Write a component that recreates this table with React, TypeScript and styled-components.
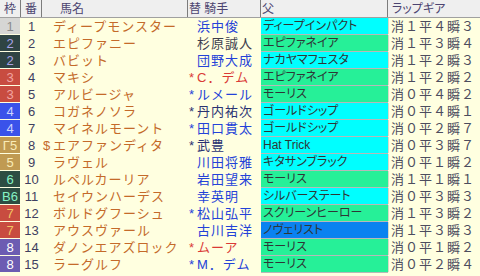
import styled, { createGlobalStyle } from "styled-components";

const GlobalStyle = createGlobalStyle`
  html, body {
    margin: 0;
    padding: 0;
    background-color: #ffffe0;
  }
  body {
    width: 480px;
    height: 276px;
    overflow: hidden;
    font-family: "Liberation Sans", "Noto Sans CJK JP", sans-serif;
  }
`;

const COLS = "21px 21px 146px 73px 127px 1fr";

const Table = styled.div`
  display: flex;
  flex-direction: column;
  width: 480px;
  background-color: #ffffe0;
`;

const HeaderRow = styled.div`
  display: grid;
  grid-template-columns: ${COLS};
  height: 17px;
  background-color: #efefef;
  border-bottom: 1px solid #a0a0a0;
`;

const HeadCell = styled.div<{ $align?: string; $pad?: number; $last?: boolean }>`
  display: flex;
  align-items: center;
  justify-content: ${(p) => p.$align || "flex-start"};
  padding-left: ${(p) => p.$pad || 0}px;
  border-right: ${(p) => (p.$last ? "none" : "1px solid #7c7c7c")};
  font-size: 12px;
  line-height: 16px;
  color: #4c4470;
  font-feature-settings: "palt";
  white-space: nowrap;
  overflow: hidden;
`;

const Row = styled.div`
  display: grid;
  grid-template-columns: ${COLS};
  height: 17px;
`;

const Waku = styled.div<{ $bg: string; $fg: string }>`
  width: 20px;
  height: 16px;
  display: flex;
  align-items: center;
  justify-content: center;
  background-color: ${(p) => p.$bg};
  color: ${(p) => p.$fg};
  font-size: 13px;
  line-height: 15px;
`;

const Num = styled.div`
  height: 16px;
  display: flex;
  align-items: center;
  justify-content: center;
  color: #3f4060;
  font-size: 13px;
  line-height: 15px;
`;

const NameCell = styled.div`
  height: 16px;
  display: flex;
  align-items: center;
  padding-left: 1px;
  color: #c46a2a;
  font-size: 13px;
  letter-spacing: 1px;
  line-height: 15px;
  white-space: nowrap;
  overflow: hidden;
`;

const Mark = styled.span<{ $w: number }>`
  display: inline-block;
  flex: none;
  width: ${(p) => p.$w}px;
  letter-spacing: 0;
`;

const JockeyCell = styled.div<{ $color: string }>`
  height: 16px;
  display: flex;
  align-items: center;
  padding-left: 1px;
  color: ${(p) => p.$color};
  font-size: 13px;
  letter-spacing: 1px;
  line-height: 15px;
  white-space: nowrap;
  overflow: hidden;
`;

const SireCell = styled.div<{ $bg: string }>`
  height: 16px;
  display: flex;
  align-items: center;
  padding-left: 2px;
  background-color: ${(p) => p.$bg};
  border-bottom: 1px solid #b8b8b8;
  color: #2e3636;
  font-size: 12px;
  line-height: 14px;
  font-feature-settings: "palt";
  white-space: nowrap;
  overflow: hidden;
`;

const GearCell = styled.div`
  height: 16px;
  display: flex;
  align-items: center;
  padding-left: 2px;
  border-left: 1px solid #d8d8c8;
  color: #4c4c5e;
  font-size: 13px;
  letter-spacing: 1px;
  line-height: 15px;
  white-space: nowrap;
  overflow: hidden;
`;

const WAKU: Record<string, [string, string]> = {
  "1": ["#d6d6d4", "#8c8c8c"],
  "2": ["#2f4444", "#aaa2e6"],
  "3": ["#c84c40", "#f2a4a0"],
  "4": ["#3a52ea", "#ccd4ff"],
  "5": ["#c09a52", "#faecb8"],
  "6": ["#2d4d42", "#86f2c4"],
  "7": ["#c84c40", "#f2c462"],
  "8": ["#6c5cb2", "#ffffff"],
};

const SIRE = {
  cyan: "#00ffff",
  green: "#26f098",
  blue: "#0a82f0",
};

const BLUE = "#2442d8";
const DARK = "#3e3e4e";
const NAVY = "#2a3272";
const RED = "#da3a36";

type Horse = {
  waku: string;
  label?: string;
  no: number;
  mark?: string;
  name: string;
  jmark?: string;
  jockey: string;
  jcolor: string;
  sire: string;
  sireBg: string;
  gear: string;
};

const horses: Horse[] = [
  { waku: "1", no: 1, name: "ディープモンスター", jockey: "浜中俊", jcolor: BLUE, sire: "ディープインパクト", sireBg: SIRE.cyan, gear: "消１平４瞬３" },
  { waku: "2", no: 2, name: "エピファニー", jockey: "杉原誠人", jcolor: DARK, sire: "エピファネイア", sireBg: SIRE.green, gear: "消１平３瞬４" },
  { waku: "2", no: 3, name: "バビット", jockey: "団野大成", jcolor: BLUE, sire: "ナカヤマフェスタ", sireBg: SIRE.cyan, gear: "消１平２瞬３" },
  { waku: "3", no: 4, name: "マキシ", jmark: "*", jockey: "C．デム", jcolor: RED, sire: "エピファネイア", sireBg: SIRE.green, gear: "消１平２瞬２" },
  { waku: "3", no: 5, name: "アルビージャ", jmark: "*", jockey: "ルメール", jcolor: BLUE, sire: "モーリス", sireBg: SIRE.green, gear: "消０平４瞬２" },
  { waku: "4", no: 6, name: "コガネノソラ", jmark: "*", jockey: "丹内祐次", jcolor: NAVY, sire: "ゴールドシップ", sireBg: SIRE.cyan, gear: "消０平４瞬１" },
  { waku: "4", no: 7, name: "マイネルモーント", jmark: "*", jockey: "田口貫太", jcolor: BLUE, sire: "ゴールドシップ", sireBg: SIRE.cyan, gear: "消０平２瞬７" },
  { waku: "5", label: "Γ5", no: 8, mark: "$", name: "エアファンディタ", jmark: "*", jockey: "武豊", jcolor: NAVY, sire: "Hat Trick", sireBg: SIRE.cyan, gear: "消０平３瞬７" },
  { waku: "5", no: 9, name: "ラヴェル", jockey: "川田将雅", jcolor: BLUE, sire: "キタサンブラック", sireBg: SIRE.cyan, gear: "消０平１瞬２" },
  { waku: "6", no: 10, name: "ルペルカーリア", jockey: "岩田望来", jcolor: BLUE, sire: "モーリス", sireBg: SIRE.green, gear: "消１平１瞬１" },
  { waku: "6", label: "B6", no: 11, name: "セイウンハーデス", jockey: "幸英明", jcolor: BLUE, sire: "シルバーステート", sireBg: SIRE.cyan, gear: "消０平３瞬３" },
  { waku: "7", no: 12, name: "ボルドグフーシュ", jmark: "*", jockey: "松山弘平", jcolor: BLUE, sire: "スクリーンヒーロー", sireBg: SIRE.green, gear: "消１平３瞬２" },
  { waku: "7", no: 13, name: "アウスヴァール", jockey: "古川吉洋", jcolor: BLUE, sire: "ノヴェリスト", sireBg: SIRE.blue, gear: "消１平３瞬３" },
  { waku: "8", no: 14, name: "ダノンエアズロック", jmark: "*", jockey: "ムーア", jcolor: RED, sire: "モーリス", sireBg: SIRE.green, gear: "消０平１瞬２" },
  { waku: "8", no: 15, name: "ラーグルフ", jmark: "*", jockey: "M．デム", jcolor: BLUE, sire: "モーリス", sireBg: SIRE.green, gear: "消０平２瞬４" },
];

function App() {
  return (
    <>
      <GlobalStyle />
      <Table>
        <HeaderRow>
          <HeadCell $align="center">枠</HeadCell>
          <HeadCell $align="center">番</HeadCell>
          <HeadCell $pad={18}>馬名</HeadCell>
          <HeadCell $pad={1}>替&nbsp;騎手</HeadCell>
          <HeadCell $pad={1}>父</HeadCell>
          <HeadCell $pad={4} $last>
            ラップギア
          </HeadCell>
        </HeaderRow>
        {horses.map((h) => {
          const [bg, fg] = WAKU[h.waku];
          return (
            <Row key={h.no}>
              <Waku $bg={bg} $fg={fg}>
                {h.label || h.waku}
              </Waku>
              <Num>{h.no}</Num>
              <NameCell>
                <Mark $w={10}>{h.mark}</Mark>
                {h.name}
              </NameCell>
              <JockeyCell $color={h.jcolor}>
                <Mark $w={8}>{h.jmark}</Mark>
                {h.jockey}
              </JockeyCell>
              <SireCell $bg={h.sireBg}>{h.sire}</SireCell>
              <GearCell>{h.gear}</GearCell>
            </Row>
          );
        })}
      </Table>
    </>
  );
}

export default App;
